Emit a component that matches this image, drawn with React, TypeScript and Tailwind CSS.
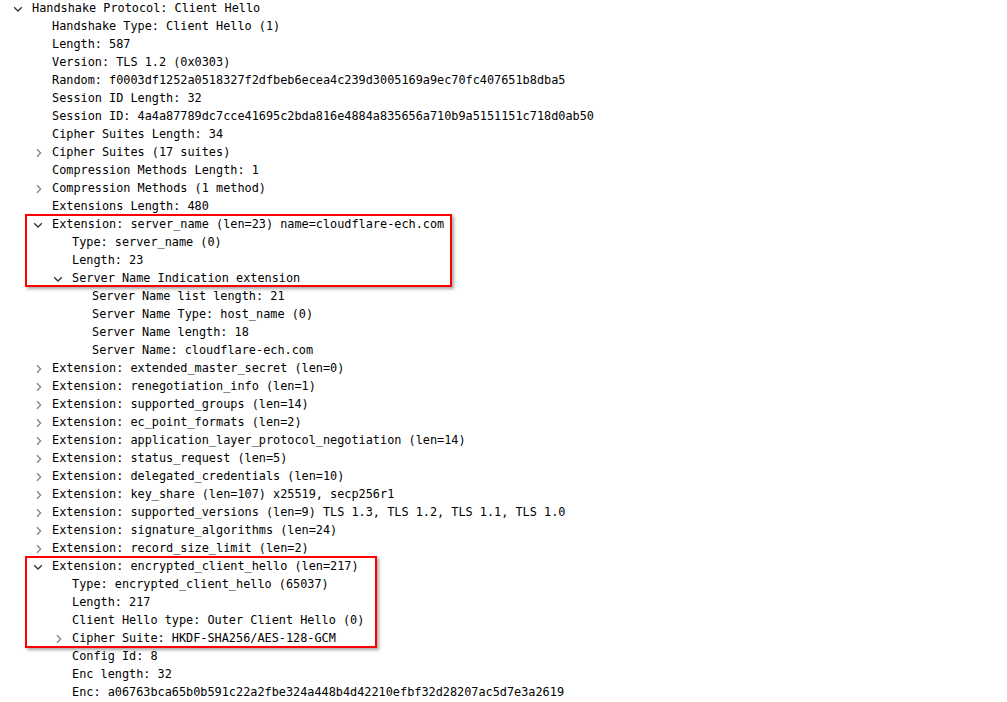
type Row = { level: number; text: string; arrow?: 'open' | 'closed' }

const rows: Row[] = [
  { level: 0, text: 'Handshake Protocol: Client Hello', arrow: 'open' },
  { level: 1, text: 'Handshake Type: Client Hello (1)' },
  { level: 1, text: 'Length: 587' },
  { level: 1, text: 'Version: TLS 1.2 (0x0303)' },
  { level: 1, text: 'Random: f0003df1252a0518327f2dfbeb6ecea4c239d3005169a9ec70fc407651b8dba5' },
  { level: 1, text: 'Session ID Length: 32' },
  { level: 1, text: 'Session ID: 4a4a87789dc7cce41695c2bda816e4884a835656a710b9a5151151c718d0ab50' },
  { level: 1, text: 'Cipher Suites Length: 34' },
  { level: 1, text: 'Cipher Suites (17 suites)', arrow: 'closed' },
  { level: 1, text: 'Compression Methods Length: 1' },
  { level: 1, text: 'Compression Methods (1 method)', arrow: 'closed' },
  { level: 1, text: 'Extensions Length: 480' },
  { level: 1, text: 'Extension: server_name (len=23) name=cloudflare-ech.com', arrow: 'open' },
  { level: 2, text: 'Type: server_name (0)' },
  { level: 2, text: 'Length: 23' },
  { level: 2, text: 'Server Name Indication extension', arrow: 'open' },
  { level: 3, text: 'Server Name list length: 21' },
  { level: 3, text: 'Server Name Type: host_name (0)' },
  { level: 3, text: 'Server Name length: 18' },
  { level: 3, text: 'Server Name: cloudflare-ech.com' },
  { level: 1, text: 'Extension: extended_master_secret (len=0)', arrow: 'closed' },
  { level: 1, text: 'Extension: renegotiation_info (len=1)', arrow: 'closed' },
  { level: 1, text: 'Extension: supported_groups (len=14)', arrow: 'closed' },
  { level: 1, text: 'Extension: ec_point_formats (len=2)', arrow: 'closed' },
  { level: 1, text: 'Extension: application_layer_protocol_negotiation (len=14)', arrow: 'closed' },
  { level: 1, text: 'Extension: status_request (len=5)', arrow: 'closed' },
  { level: 1, text: 'Extension: delegated_credentials (len=10)', arrow: 'closed' },
  { level: 1, text: 'Extension: key_share (len=107) x25519, secp256r1', arrow: 'closed' },
  { level: 1, text: 'Extension: supported_versions (len=9) TLS 1.3, TLS 1.2, TLS 1.1, TLS 1.0', arrow: 'closed' },
  { level: 1, text: 'Extension: signature_algorithms (len=24)', arrow: 'closed' },
  { level: 1, text: 'Extension: record_size_limit (len=2)', arrow: 'closed' },
  { level: 1, text: 'Extension: encrypted_client_hello (len=217)', arrow: 'open' },
  { level: 2, text: 'Type: encrypted_client_hello (65037)' },
  { level: 2, text: 'Length: 217' },
  { level: 2, text: 'Client Hello type: Outer Client Hello (0)' },
  { level: 2, text: 'Cipher Suite: HKDF-SHA256/AES-128-GCM', arrow: 'closed' },
  { level: 2, text: 'Config Id: 8' },
  { level: 2, text: 'Enc length: 32' },
  { level: 2, text: 'Enc: a06763bca65b0b591c22a2fbe324a448b4d42210efbf32d28207ac5d7e3a2619' },
]

const pad = ['pl-[12px]', 'pl-[32px]', 'pl-[52px]', 'pl-[72px]']

const Arrow = ({ kind }: { kind?: 'open' | 'closed' }) => (
  <span className="w-[20px] h-[18px] flex items-center shrink-0">
    {kind === 'open' && (
      <svg width="10" height="8" viewBox="0 0 10 8" className="ml-[1px]">
        <path d="M1.2 2.3 L5 6 L8.8 2.3" fill="none" stroke="#333" strokeWidth="1.4" />
      </svg>
    )}
    {kind === 'closed' && (
      <svg width="8" height="10" viewBox="0 0 8 10" className="ml-[3px]">
        <path d="M2 1.3 L5.6 5 L2 8.7" fill="none" stroke="#888" strokeWidth="1.4" />
      </svg>
    )}
  </span>
)

const App = () => (
  <div className="relative w-[1007px] h-[702px] bg-white overflow-hidden">
    <div
      className="text-[11.85px] text-black"
      style={{ fontFamily: '"DejaVu Sans Mono", "Liberation Mono", monospace' }}
    >
      {rows.map((r, i) => (
        <div key={i} className={`flex items-center h-[18px] whitespace-pre ${pad[r.level]}`}>
          <Arrow kind={r.arrow} />
          <span>{r.text}</span>
        </div>
      ))}
    </div>
    <div className="absolute left-[25px] top-[214px] w-[427px] h-[73px] border-2 border-[#ff0000] shadow-[2px_2px_3px_rgba(0,0,0,0.35)]" />
    <div className="absolute left-[25px] top-[556px] w-[352px] h-[92px] border-2 border-[#ff0000] shadow-[2px_2px_3px_rgba(0,0,0,0.35)]" />
  </div>
)

export default App
